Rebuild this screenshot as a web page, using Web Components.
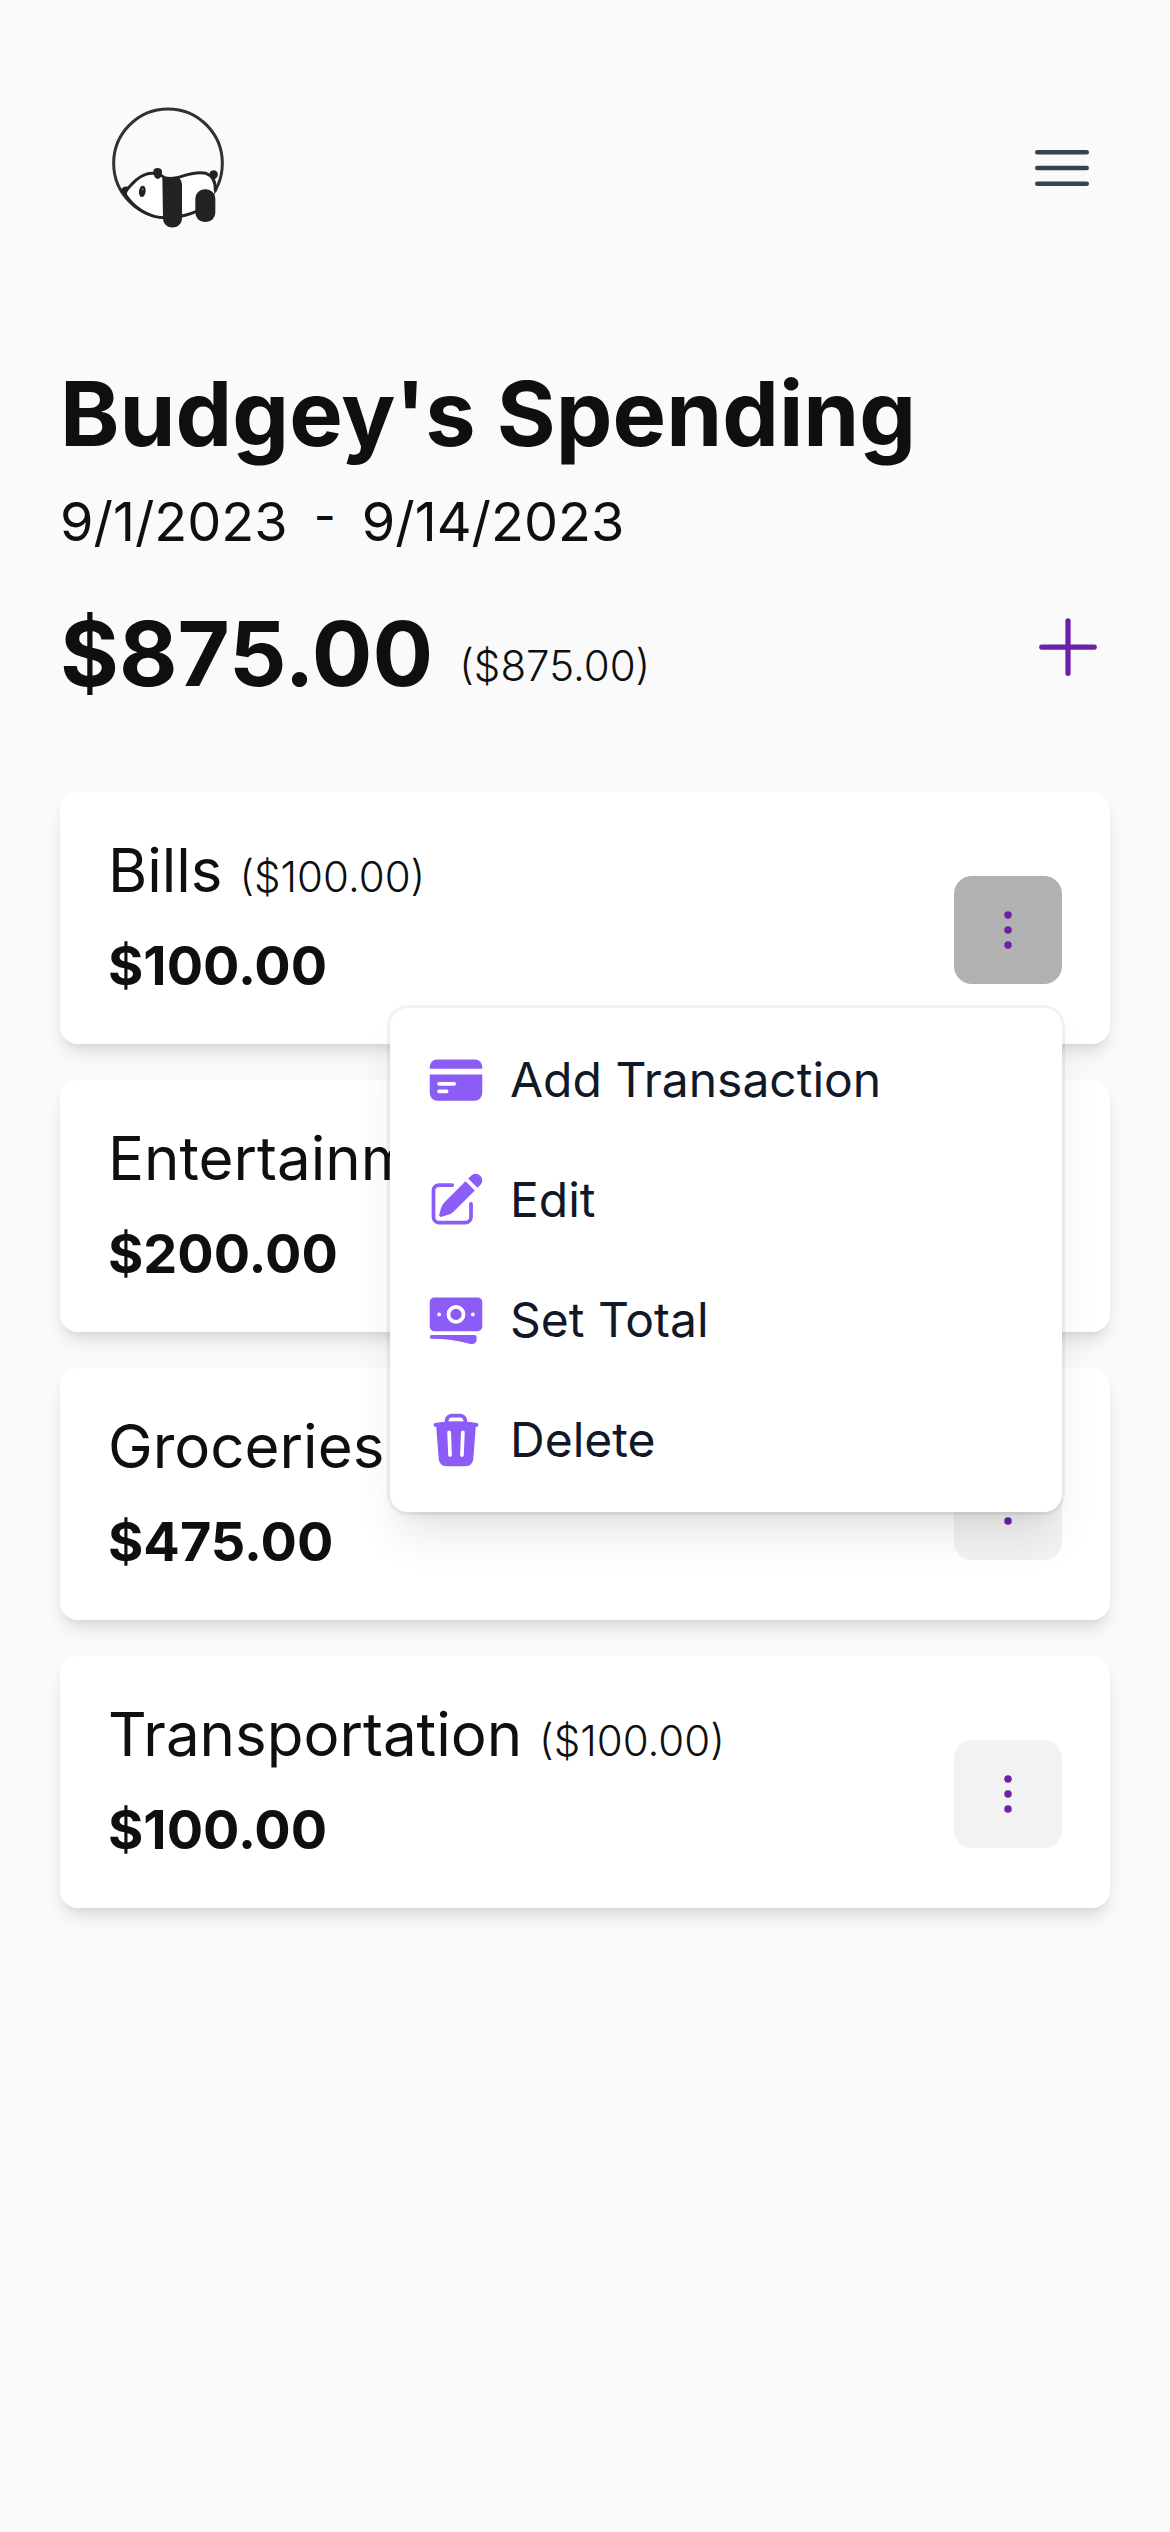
<!DOCTYPE html>
<html lang="en">
<head>
<meta charset="utf-8">
<meta name="viewport" content="width=device-width, initial-scale=1">
<title>Budgey's Spending</title>
<style>
  :root {
    --ink: #0f0f0f;
    --purple: #6b21a8;
    --violet: #8b5cf6;
    --radius: 18px;
  }
  body {
    margin: 0;
    background: #fafafa;
    color: var(--ink);
    font-family: Inter, "Liberation Sans", sans-serif;
  }
</style>
</head>
<body>
<budget-app></budget-app>

<script>
const ICONS = {
  bars: '<path d="M3.75 6.75h16.5M3.75 12h16.5m-16.5 5.25h16.5"/>',
  plus: '<path d="M12 4.5v15m7.5-7.5h-15"/>',
  dots: '<path d="M12 6.75a.75.75 0 110-1.5.75.75 0 010 1.5zM12 12.75a.75.75 0 110-1.5.75.75 0 010 1.5zM12 18.75a.75.75 0 110-1.5.75.75 0 010 1.5z"/>',
  card: '<path d="M4.5 3.75a3 3 0 00-3 3v.75h21v-.75a3 3 0 00-3-3h-15z"/><path fill-rule="evenodd" d="M22.5 9.75h-21v7.5a3 3 0 003 3h15a3 3 0 003-3v-7.5zm-18 3.75a.75.75 0 01.75-.75h6a.75.75 0 010 1.5h-6a.75.75 0 01-.75-.75zm.75 2.25a.75.75 0 000 1.5h3a.75.75 0 000-1.5h-3z"/>',
  edit: '<path d="M21.731 2.269a2.625 2.625 0 00-3.712 0l-1.157 1.157 3.712 3.712 1.157-1.157a2.625 2.625 0 000-3.712zM19.513 8.199l-3.712-3.712-8.4 8.4a5.25 5.25 0 00-1.32 2.214l-.8 2.685a.75.75 0 00.933.933l2.685-.8a5.25 5.25 0 002.214-1.32l8.4-8.4z"/><path d="M5.25 5.25a3 3 0 00-3 3v10.5a3 3 0 003 3h10.5a3 3 0 003-3V13.5a.75.75 0 00-1.5 0v5.25a1.5 1.5 0 01-1.5 1.5H5.25a1.5 1.5 0 01-1.5-1.5V8.25a1.5 1.5 0 011.5-1.5h5.25a.75.75 0 000-1.5H5.25z"/>',
  cash: '<path d="M12 7.5a2.25 2.25 0 100 4.5 2.25 2.25 0 000-4.5z"/><path fill-rule="evenodd" d="M1.5 4.875C1.5 3.839 2.34 3 3.375 3h17.25c1.035 0 1.875.84 1.875 1.875v9.75c0 1.036-.84 1.875-1.875 1.875H3.375A1.875 1.875 0 011.5 14.625v-9.75zM8.25 9.75a3.75 3.75 0 117.5 0 3.75 3.75 0 01-7.5 0zM18.75 9a.75.75 0 00-.75.75v.008c0 .414.336.75.75.75h.008a.75.75 0 00.75-.75V9.75a.75.75 0 00-.75-.75h-.008zM4.5 9.75A.75.75 0 015.25 9h.008a.75.75 0 01.75.75v.008a.75.75 0 01-.75.75H5.25a.75.75 0 01-.75-.75V9.75z"/><path d="M2.25 18a.75.75 0 000 1.5c5.4 0 10.63.722 15.6 2.075 1.19.324 2.4-.558 2.4-1.82V18.75a.75.75 0 00-.75-.75H2.25z"/>',
  trash: '<path fill-rule="evenodd" d="M16.5 4.478v.227a48.816 48.816 0 013.878.512.75.75 0 11-.256 1.478l-.209-.035-1.005 13.07a3 3 0 01-2.991 2.77H8.084a3 3 0 01-2.991-2.77L4.087 6.66l-.209.035a.75.75 0 01-.256-1.478A48.567 48.567 0 017.5 4.705v-.227c0-1.564 1.213-2.9 2.816-2.951a52.662 52.662 0 013.369 0c1.603.051 2.815 1.387 2.815 2.951zm-6.136-1.452a51.196 51.196 0 013.273 0C14.39 3.05 15 3.684 15 4.478v.113a49.488 49.488 0 00-6 0v-.113c0-.794.609-1.428 1.364-1.452zm-.355 5.945a.75.75 0 10-1.5.058l.347 9a.75.75 0 101.499-.058l-.346-9zm5.48.058a.75.75 0 10-1.498-.058l-.347 9a.75.75 0 001.5.058l.345-9z"/>'
};
const OUTLINED = ['bars', 'plus', 'dots'];

class BaseElement extends HTMLElement {
  constructor() {
    super();
    this.attachShadow({ mode: 'open' });
  }
  connectedCallback() {
    this.shadowRoot.innerHTML =
      '<style>*{box-sizing:border-box}button{font:inherit;color:inherit;border:0;padding:0;margin:0;background:none;cursor:pointer}</style>' +
      this.render();
  }
}

customElements.define('app-icon', class extends BaseElement {
  render() {
    const name = this.getAttribute('name');
    const paint = OUTLINED.includes(name)
      ? 'fill="none" stroke="currentColor" stroke-width="1.5" stroke-linecap="round" stroke-linejoin="round"'
      : 'fill="currentColor"';
    return `<style>
        :host { display: block; flex: none; width: var(--icon-size, 60px); height: var(--icon-size, 60px); }
        svg { display: block; width: 100%; height: 100%; }
      </style>
      <svg viewBox="0 0 24 24" ${paint} aria-hidden="true">${ICONS[name]}</svg>`;
  }
});

customElements.define('panda-logo', class extends BaseElement {
  render() {
    return `<style>
        :host { display: block; }
        svg { display: block; width: 156px; height: 156px; }
      </style>
      <svg viewBox="0 0 468 468" role="img" aria-label="Budgey">
        <circle cx="234" cy="220" r="163" fill="none" stroke="#333132" stroke-width="9"/>
        <path d="M106 305C125 283 140 262 167 253C190 245 208 251 224 263C240 268 262 264 282 257C305 250 330 246 348 250C368 257 377 276 376 302L350 345L290 377C262 386 214 385 181 371C148 357 122 334 106 305Z" fill="#fff"/>
        <path d="M106 304C125 283 140 262 167 253C190 245 208 251 224 263C240 268 262 264 282 257C305 250 330 246 348 250C368 257 377 276 376 302" fill="none" stroke="#262425" stroke-width="9" stroke-linecap="round"/>
        <path d="M101 303C117 338 153 367 193 379C222 387 272 384 320 364" fill="none" stroke="#262425" stroke-width="9"/>
        <path d="M92 302C96 291 106 287 119 291C116 300 110 307 110 315C101 314 94 309 92 302Z" fill="#232122"/>
        <path d="M190 244C190 231 215 231 216 244C217 254 213 265 204 267C195 266 190 256 190 244Z" fill="#232122"/>
        <path d="M359 249C362 239 377 238 382 247C386 256 381 265 373 268C366 262 359 257 359 249Z" fill="#232122"/>
        <ellipse cx="157" cy="304" rx="10" ry="17" transform="rotate(8 157 304)" fill="#232122"/>
        <circle cx="158" cy="298" r="3" fill="#77787a"/>
        <path d="M217 260Q245 270 265 260Q276 271 276 286V384C276 422 219 422 219 384Z" fill="#232122"/>
        <rect x="316" y="298" width="60" height="98" rx="28" fill="#232122"/>
      </svg>`;
  }
});

customElements.define('site-header', class extends BaseElement {
  render() {
    return `<style>
        :host { display: block; }
        header { display: flex; align-items: center; justify-content: space-between; padding: 90px 72px 90px 90px; }
        button { color: #374151; --icon-size: 72px; }
      </style>
      <header>
        <a href="#" aria-label="Home"><panda-logo></panda-logo></a>
        <button type="button" aria-label="Open main menu"><app-icon name="bars"></app-icon></button>
      </header>`;
  }
});

customElements.define('budget-summary', class extends BaseElement {
  render() {
    return `<style>
        :host { display: flex; flex-direction: column; }
        h1, h2, p { margin: 0; }
        h1, h2 { font-size: 90px; line-height: 108px; font-weight: 700; }
        .dates { display: flex; gap: 26px; margin-top: 12px; font-size: 54px; line-height: 84px; }
        .dates .dash { font-size: 48px; line-height: 72px; }
        .total { display: flex; align-items: center; justify-content: space-between; margin-top: 36px; }
        .sum { display: flex; align-items: flex-end; gap: 26px; }
        .sum p { font-size: 42px; line-height: 60px; font-weight: 300; padding-bottom: 12px; }
        button { color: var(--purple); --icon-size: 84px; margin-bottom: 14px; }
      </style>
      <h1><slot name="title"></slot></h1>
      <div class="dates"><slot name="from"></slot><span class="dash">-</span><slot name="to"></slot></div>
      <div class="total">
        <div class="sum"><h2><slot name="total"></slot></h2><p><slot name="budget"></slot></p></div>
        <button type="button" aria-label="Add category"><app-icon name="plus"></app-icon></button>
      </div>`;
  }
});

customElements.define('menu-item', class extends BaseElement {
  render() {
    return `<style>
        :host { display: block; }
        button { display: flex; align-items: center; gap: 24px; width: 100%; padding: 24px 36px; font-size: 48px; line-height: 72px; color: #111827; text-align: left; }
        app-icon { color: var(--violet); }
      </style>
      <button type="button" role="menuitem"><app-icon name="${this.getAttribute('icon')}"></app-icon><slot></slot></button>`;
  }
});

customElements.define('action-menu', class extends BaseElement {
  render() {
    const open = this.hasAttribute('open');
    return `<style>
        :host { display: block; position: relative; }
        .trigger { display: flex; padding: 24px; border-radius: var(--radius); background: #f2f2f2; color: var(--purple); }
        :host([open]) .trigger { background: #b1b1b1; }
        .menu { position: absolute; z-index: 10; top: 100%; right: 0; margin-top: 24px; width: 672px; padding: 12px 0;
          border-radius: var(--radius); background: #fff;
          box-shadow: 0 0 0 3px rgb(0 0 0 / .05), 0 30px 45px -9px rgb(0 0 0 / .1), 0 12px 18px -12px rgb(0 0 0 / .1); }
      </style>
      <button class="trigger" type="button" aria-label="Options" aria-haspopup="menu" aria-expanded="${open}"><app-icon name="dots"></app-icon></button>
      ${open ? `<div class="menu" role="menu">
        <menu-item icon="card">Add Transaction</menu-item>
        <menu-item icon="edit">Edit</menu-item>
        <menu-item icon="cash">Set Total</menu-item>
        <menu-item icon="trash">Delete</menu-item>
      </div>` : ''}`;
  }
});

customElements.define('category-card', class extends BaseElement {
  render() {
    return `<style>
        :host { display: flex; justify-content: space-between; align-items: flex-end; padding: 36px 48px;
          border-radius: var(--radius); background: #fff;
          box-shadow: 0 12px 18px -3px rgb(0 0 0 / .1), 0 6px 12px -6px rgb(0 0 0 / .1); }
        .text { display: flex; flex-direction: column; gap: 12px; }
        h3, p { margin: 0; line-height: 84px; }
        h3 { font-size: 60px; font-weight: 400; }
        small { font-size: 42px; line-height: 60px; font-weight: 300; }
        p { font-size: 54px; font-weight: 700; }
        action-menu { margin-bottom: 24px; }
      </style>
      <div class="text">
        <h3><slot></slot> <small>(${this.getAttribute('budget')})</small></h3>
        <p>${this.getAttribute('left')}</p>
      </div>
      <action-menu ${this.hasAttribute('menu-open') ? 'open' : ''}></action-menu>`;
  }
});

customElements.define('budget-app', class extends BaseElement {
  render() {
    return `<style>
        :host { display: block; }
        main { padding: 24px 60px 60px; }
        .cards { display: flex; flex-direction: column; gap: 36px; margin-top: 84px; }
      </style>
      <site-header></site-header>
      <main>
        <budget-summary>
          <span slot="title">Budgey's Spending</span>
          <span slot="from">9/1/2023</span>
          <span slot="to">9/14/2023</span>
          <span slot="total">$875.00</span>
          <span slot="budget">($875.00)</span>
        </budget-summary>
        <div class="cards">
          <category-card budget="$100.00" left="$100.00" menu-open>Bills</category-card>
          <category-card budget="$200.00" left="$200.00">Entertainment</category-card>
          <category-card budget="$475.00" left="$475.00">Groceries</category-card>
          <category-card budget="$100.00" left="$100.00">Transportation</category-card>
        </div>
      </main>`;
  }
});
</script>
</body>
</html>
